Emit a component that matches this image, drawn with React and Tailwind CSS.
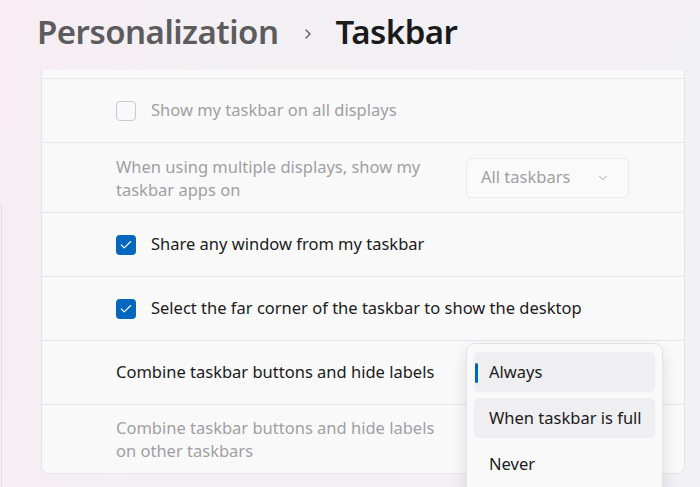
import { ChevronDown, ChevronRight, Check } from "lucide-react";

const font = { fontFamily: '"Noto Sans", "Open Sans", sans-serif' };

function Box({ checked, disabled }) {
  if (checked) {
    return (
      <span className="flex h-5 w-5 shrink-0 items-center justify-center rounded-[4px] bg-[#0067c0]">
        <Check className="h-3.5 w-3.5 text-white" strokeWidth={2} />
      </span>
    );
  }
  return (
    <span
      className={
        "h-5 w-5 shrink-0 rounded-[4px] border bg-[#f9f8fa] " +
        (disabled ? "border-[#c9c8cc]" : "border-[#8a8a8a]")
      }
    />
  );
}

function CheckRow({ label, checked, disabled }) {
  return (
    <div className="flex h-16 items-center gap-[15px] border-t border-[#e8e6ea] pl-[74px]">
      <Box checked={checked} disabled={disabled} />
      <span className={disabled ? "text-[#a09fa3]" : "text-[#1b1b1b]"}>{label}</span>
    </div>
  );
}

function MenuItem({ label, selected, hover }) {
  return (
    <div
      className={
        "relative flex h-10 items-center rounded-[5px] pl-[15px] " +
        (selected || hover ? "bg-[#efeef0]" : "")
      }
    >
      {selected && (
        <span className="absolute left-[1px] top-[11px] h-[20px] w-[3px] rounded-full bg-[#0067c0]" />
      )}
      <span className="text-[#1b1b1b]">{label}</span>
    </div>
  );
}

export default function App() {
  return (
    <div
      style={font}
      className="relative h-[487px] w-[700px] overflow-hidden bg-[linear-gradient(100deg,#f7edf2_0%,#f3f0f4_30%,#f2f1f5_100%)] text-[16.5px]"
    >
      <div className="absolute left-[1px] top-[203px] h-[300px] w-px bg-[#e4dfe2]" />

      <div className="flex h-[70px] items-center pl-[37px] pb-[6px]">
        <span className="text-[33px] font-semibold tracking-[-0.5px] text-[#5c5b5e]">
          Personalization
        </span>
        <ChevronRight className="ml-[21px] mr-[20px] mt-[4px] h-4 w-4 text-[#5c5b5e]" strokeWidth={2} />
        <span className="text-[33px] font-semibold tracking-[-0.5px] text-[#1a1a1a]">
          Taskbar
        </span>
      </div>

      <div className="ml-[41px] w-[644px] rounded-b-lg border-x border-b border-[#e6e4e8] bg-[#fbfafb]/90">
        <div className="h-2" />
        <CheckRow label="Show my taskbar on all displays" disabled />

        <div className="flex h-[70px] items-center justify-between border-t border-[#e8e6ea] pl-[74px] pr-[55px]">
          <div className="leading-[23px] text-[#a09fa3]">
            When using multiple displays, show my
            <br />
            taskbar apps on
          </div>
          <div className="flex h-10 w-[163px] items-center justify-between rounded-[5px] border border-[#ebe9ec] bg-[#fbfafb] pl-[14px] pr-[18px] text-[#a09fa3]">
            <span>All taskbars</span>
            <ChevronDown className="h-3.5 w-3.5" strokeWidth={1.5} />
          </div>
        </div>

        <CheckRow label="Share any window from my taskbar" checked />
        <CheckRow label="Select the far corner of the taskbar to show the desktop" checked />

        <div className="flex h-16 items-center border-t border-[#e8e6ea] pl-[74px] text-[#1b1b1b]">
          Combine taskbar buttons and hide labels
        </div>

        <div className="flex h-[69px] items-center border-t border-[#e8e6ea] pl-[74px] leading-[23px] text-[#a09fa3]">
          <div>
            Combine taskbar buttons and hide labels
            <br />
            on other taskbars
          </div>
        </div>
      </div>

      <div className="absolute left-[466px] top-[343px] flex w-[197px] flex-col gap-[6px] rounded-lg border border-[#e4e2e6] bg-[#f9f9fa] px-[7px] pb-6 pt-[8px] shadow-[0_8px_16px_rgba(0,0,0,0.12)]">
        <MenuItem label="Always" selected />
        <MenuItem label="When taskbar is full" hover />
        <MenuItem label="Never" />
      </div>
    </div>
  );
}
